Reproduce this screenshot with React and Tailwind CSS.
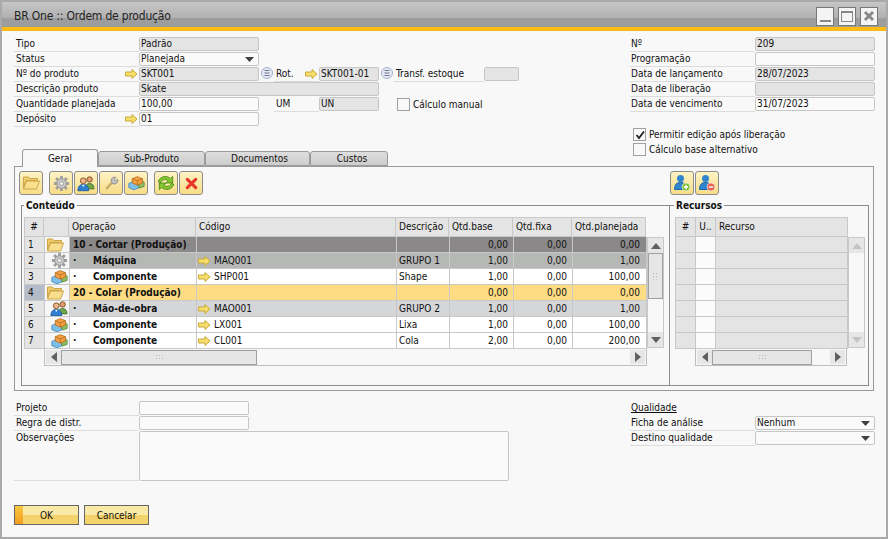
import React from 'react';

const FONT = { fontFamily: '"DejaVu Sans Condensed", "DejaVu Sans", sans-serif' };

const Arrow = () => (
  <svg width="13" height="10" viewBox="0 0 13 10" className="shrink-0">
    <path d="M0.500 3h6.500V0.500L12 5 7 9.500V7H0.500z" fill="#f6de6a" stroke="#c8a93a" strokeWidth="1" />
  </svg>
);

const ListIcon = () => (
  <svg width="12" height="12" viewBox="0 0 12 12" className="shrink-0">
    <circle cx="6" cy="6" r="5.500" fill="#e6eaf4" stroke="#a4aeca" />
    <path d="M3.500 3.500h5M3.500 6h5M3.500 8.500h5" stroke="#6b7690" strokeWidth="1" />
  </svg>
);

const Caret = () => (
  <svg width="9" height="5" viewBox="0 0 9 5" className="shrink-0">
    <path d="M0 0h9L4.500 5z" fill="#404040" />
  </svg>
);

const Folder = () => (
  <svg width="17" height="14" viewBox="0 0 17 14" className="shrink-0">
    <path d="M0.500 1h5l1.500 1.500h7.500v2H3L0.500 12z" fill="#f0cb6c" stroke="#cda548" />
    <path d="M3.500 5h13l-3 8H0.500z" fill="#f9df8e" stroke="#cda548" />
  </svg>
);

const Gear = () => (
  <svg width="17" height="17" viewBox="0 0 18 18" className="shrink-0">
    <path d="M9 1v3.500M9 13.500V17M1 9h3.500M13.500 9H17M3.300 3.300l2.500 2.500M12.200 12.200l2.500 2.500M14.700 3.300l-2.500 2.500M5.800 12.200l-2.500 2.500" stroke="#a0a0a0" strokeWidth="3" />
    <circle cx="9" cy="9" r="5" fill="#cccccc" stroke="#909090" />
    <circle cx="9" cy="9" r="2.200" fill="#f2f2f2" stroke="#989898" />
  </svg>
);

const Users = () => (
  <svg width="18" height="17" viewBox="0 0 20 18" className="shrink-0">
    <circle cx="14" cy="4.500" r="3" fill="#e0a070" stroke="#7a4a20" />
    <path d="M9 15c0-4 2-6 5-6s5 2 5 6z" fill="#6fa64a" stroke="#47752f" />
    <circle cx="7" cy="6" r="3.200" fill="#f0b888" stroke="#7a4a20" />
    <path d="M1 17c0-5 2.500-7 6-7s6 2 6 7z" fill="#2f7fd0" stroke="#1f5a9c" />
    <path d="M5.500 10.500 7 13l1.500-2.500z" fill="#fff" />
  </svg>
);

const Wrench = () => (
  <svg width="16" height="16" viewBox="0 0 16 16" className="shrink-0">
    <path d="M4 13 9 7.500" stroke="#c9aa68" strokeWidth="2.600" strokeLinecap="round" />
    <path d="M8 5.500a3.500 3.500 0 0 1 5-3l-2 2 1.500 1.500 2-2a3.500 3.500 0 0 1-5 4.500z" fill="#c4c4c4" stroke="#8e8e8e" />
  </svg>
);

const Cube = () => (
  <svg width="17" height="16" viewBox="0 0 20 18" className="shrink-0">
    <path d="M1 9.500 7 7l6 2.500v5L7 17l-6-2.500z" fill="#7cc0ea" stroke="#3f88c0" />
    <path d="M12 8l5-1.500L19 8v5l-6 2z" fill="#8cc063" stroke="#5a8a3c" />
    <path d="M5 4 11 1.500 17 4v5l-6 2.500L5 9z" fill="#f2a043" stroke="#b86e1c" />
    <path d="M5 4l6 2.500L17 4M11 6.500v5" fill="none" stroke="#b86e1c" />
  </svg>
);

const Refresh = () => (
  <svg width="20" height="20" viewBox="0 0 18 18" className="shrink-0">
    <path d="M2 8C3 3.500 9 1.500 13 5l2-2v6h-6l2-2C8.500 5 5 6 4.500 8.500z" fill="#84c832" stroke="#4d8a18" strokeWidth="0.800" />
    <path d="M16 10c-1 4.500-7 6.500-11 3l-2 2V9h6l-2 2c2.500 2 6 1 6.500-1.500z" fill="#84c832" stroke="#4d8a18" strokeWidth="0.800" />
  </svg>
);

const Cross = () => (
  <svg width="13" height="13" viewBox="0 0 14 14" className="shrink-0">
    <path d="M2.500 2.500l9 9M11.500 2.500l-9 9" stroke="#e8382c" strokeWidth="3.400" strokeLinecap="round" />
  </svg>
);

const Person = ({ sign }) => (
  <svg width="18" height="18" viewBox="0 0 18 18" className="shrink-0">
    <circle cx="7.500" cy="4.500" r="3.500" fill="#2f86cf" />
    <path d="M1.500 15.500c0-5 2-7 6-7s6 2 6 7z" fill="#2f86cf" stroke="#1f68a8" />
    <circle cx="13" cy="13" r="4" fill={sign === 'add' ? '#7ab82e' : '#e8604c'} stroke="#fff" strokeWidth="0.600" />
    {sign === 'add' ? (
      <path d="M13 10.800v4.400M10.800 13h4.400" stroke="#fff" strokeWidth="1.500" />
    ) : (
      <path d="M10.800 13h4.400" stroke="#fff" strokeWidth="1.500" />
    )}
  </svg>
);

const Label = ({ children, className = 'w-[125px] pl-[2px]', arrow }) => (
  <div className={`h-[15px] border-b border-[#dcdcdc] flex items-center justify-between shrink-0 text-[10px] leading-[14px] ${className}`}>
    <span className="whitespace-nowrap">{children}</span>
    {arrow && <span className="pr-px"><Arrow /></span>}
  </div>
);

const Field = ({ value, className = 'w-[120px]', disabled, caret }) => (
  <div
    className={`h-[14px] border border-[#c6c6c6] rounded-[2px] flex items-center justify-between pl-px pr-1 shrink-0 text-[10px] leading-[14px] overflow-hidden ${
      disabled ? 'bg-[#e4e4e4]' : 'bg-[#fafafa]'
    } ${className}`}
  >
    <span className="whitespace-nowrap">{value}</span>
    {caret && <Caret />}
  </div>
);

const CheckBox = ({ checked, label }) => (
  <div className="flex items-center h-[15px] gap-[3px]">
    <div className="w-[13px] h-[13px] border border-[#a0a0a0] bg-[#f8f8f8] flex items-center justify-center">
      {checked && (
        <svg width="10" height="10" viewBox="0 0 10 10">
          <path d="M1.500 5l2.500 3 5-6.500" fill="none" stroke="#202020" strokeWidth="1.800" />
        </svg>
      )}
    </div>
    <span className="text-[10px] leading-[14px] whitespace-nowrap">{label}</span>
  </div>
);

const ToolBtn = ({ children, className = '' }) => (
  <div className={`w-[24px] h-[24px] rounded-[3px] border border-[#8c8c8c] bg-gradient-to-b from-[#fdf3c4] to-[#f8dc86] flex items-center justify-center shrink-0 ${className}`}>
    {children}
  </div>
);

const Tab = ({ label, active, className }) => (
  <div
    className={`flex items-center justify-center rounded-t-[3px] border border-[#9a9a9a] text-[10px] ${
      active ? 'h-[18px] bg-[#f8f8f8] border-b-0 -mb-px z-10' : 'h-[15px] bg-gradient-to-b from-[#dedede] to-[#cdcdcd]'
    } ${className}`}
  >
    {label}
  </div>
);

const ScrollGrip = ({ vertical }) => (
  <svg width={vertical ? 5 : 7} height={vertical ? 7 : 5} viewBox={vertical ? '0 0 5 7' : '0 0 7 5'}>
    {vertical ? (
      <path d="M0 0h1v1H0zM3 0h1v1H3zM0 3h1v1H0zM3 3h1v1H3zM0 6h1v1H0zM3 6h1v1H3z" fill="#b8b8b8" />
    ) : (
      <path d="M0 0h1v1H0zM3 0h1v1H3zM6 0h1v1H6zM0 3h1v1H0zM3 3h1v1H3zM6 3h1v1H6z" fill="#b8b8b8" />
    )}
  </svg>
);

const ScrollBtn = ({ dir, faded }) => {
  const d = { up: 'M0 6L5 0l5 6z', down: 'M0 0h10L5 6z', left: 'M6 0v10L0 5z', right: 'M0 0v10l6-5z' }[dir];
  const horiz = dir === 'left' || dir === 'right';
  return (
    <div className={`bg-[#e6e6e6] flex items-center justify-center shrink-0 ${horiz ? 'w-[15px] h-[14px]' : 'w-[15px] h-[15px]'}`}>
      <svg width={horiz ? 6 : 10} height={horiz ? 10 : 6} viewBox={horiz ? '0 0 6 10' : '0 0 10 6'}>
        <path d={d} fill={faded ? '#c4c4c4' : '#606060'} />
      </svg>
    </div>
  );
};

const COLS = [
  { w: 'w-[20px]', align: 'pl-[3px]' },
  { w: 'w-[25px]', align: 'justify-center' },
  { w: 'w-[127px]', align: 'pl-[3px]' },
  { w: 'w-[200px]', align: 'pl-[1px]' },
  { w: 'w-[53px]', align: 'pl-[2px]' },
  { w: 'w-[64px]', align: 'justify-end pr-[5px]' },
  { w: 'w-[59px]', align: 'justify-end pr-[5px]' },
  { w: 'w-[74px]', align: 'justify-end pr-[6px]' },
];

const HEADERS = ['#', '', 'Operação', 'Código', 'Descrição', 'Qtd.base', 'Qtd.fixa', 'Qtd.planejada'];

const ROWS = [
  { n: 1, icon: <Folder />, type: 'head', op: '10 - Cortar (Produção)', qty: ['0,00', '0,00', '0,00'], bg: 'bg-[#8a8889]' },
  { n: 2, icon: <Gear />, op: 'Máquina', code: 'MAQ001', desc: 'GRUPO 1', qty: ['1,00', '0,00', '1,00'], bg: 'bg-[#b6b8b6]' },
  { n: 3, icon: <Cube />, op: 'Componente', code: 'SHP001', desc: 'Shape', qty: ['1,00', '0,00', '100,00'], bg: 'bg-white' },
  { n: 4, icon: <Folder />, type: 'head', op: '20 - Colar (Produção)', qty: ['0,00', '0,00', '0,00'], bg: 'bg-[#fddc84]', selected: true },
  { n: 5, icon: <Users />, op: 'Mão-de-obra', code: 'MAO001', desc: 'GRUPO 2', qty: ['1,00', '0,00', '1,00'], bg: 'bg-[#d4d6d8]' },
  { n: 6, icon: <Cube />, op: 'Componente', code: 'LX001', desc: 'Lixa', qty: ['1,00', '0,00', '100,00'], bg: 'bg-white' },
  { n: 7, icon: <Cube />, op: 'Componente', code: 'CL001', desc: 'Cola', qty: ['2,00', '0,00', '200,00'], bg: 'bg-white' },
];

const cell = 'h-[16px] border-r border-b border-[#c8c8c8] flex items-center shrink-0 overflow-hidden text-[10px] leading-[14px]';

const GridRow = ({ row }) => (
  <div className="flex">
    <div className={`${cell} ${COLS[0].w} ${COLS[0].align} ${row.selected ? 'bg-[#b3bcc8]' : 'bg-[#e4e4e4]'}`}>{row.n}</div>
    <div className={`${cell} ${COLS[1].w} bg-[#f6f6f6] ${row.type === 'head' ? 'justify-start pl-[2px]' : 'justify-end pr-px'}`}>
      {row.icon}
    </div>
    <div className={`${cell} ${COLS[2].w} ${row.bg} pl-[3px] font-bold whitespace-nowrap`}>
      {row.type === 'head' ? (
        row.op
      ) : (
        <>
          <span className="w-[20px] shrink-0">·</span>
          {row.op}
        </>
      )}
    </div>
    <div className={`${cell} ${COLS[3].w} ${row.bg} gap-[3px] pl-px`}>
      {row.code && <Arrow />}
      {row.code}
    </div>
    <div className={`${cell} ${COLS[4].w} ${row.bg} ${COLS[4].align}`}>{row.desc}</div>
    {row.qty.map((q, i) => (
      <div key={i} className={`${cell} ${COLS[5 + i].w} ${row.bg} ${COLS[5 + i].align}`}>{q}</div>
    ))}
  </div>
);

const Conteudo = () => (
  <div className="relative h-[181px] w-[648px] shrink-0 border-t border-l border-b border-[#8c8c8c] pl-[2px] pt-[11px]">
    <span className="absolute left-[2px] -top-[7px] bg-[#f8f8f8] px-[2px] font-bold text-[10px] leading-[14px]">Conteúdo</span>
    <div className="flex">
      <div className="w-[622px]">
        <div className="flex h-[20px]">
          {HEADERS.map((h, i) => (
            <div key={i} className={`border-r border-b border-t border-[#c8c8c8] bg-[#e4e4e4] flex items-center pb-px shrink-0 text-[10px] ${COLS[i].w} ${i === 0 ? 'border-l justify-center' : 'pl-[3px]'}`}>{h}</div>
          ))}
        </div>
        <div className="border-l border-[#c8c8c8]">
          {ROWS.map((r) => <GridRow key={r.n} row={r} />)}
        </div>
      </div>
      <div className="mt-[20px] w-[17px] h-[111px] ml-px border border-[#c8c8c8] bg-[#f8f8f8] flex flex-col items-center">
        <ScrollBtn dir="up" />
        <div className="w-[15px] h-[46px] border border-[#a0a0a0] bg-[#e6e6e6] flex items-center justify-center shrink-0">
          <ScrollGrip vertical />
        </div>
        <div className="flex-1" />
        <ScrollBtn dir="down" />
      </div>
    </div>
    <div className="ml-[20px] w-[603px] h-[17px] border-r border-b border-l border-[#bdbdbd] flex items-center justify-between px-px">
      <ScrollBtn dir="left" />
      <div className="w-[196px] mr-auto h-[15px] border border-[#a0a0a0] bg-[#e6e6e6] flex items-center justify-center">
        <ScrollGrip />
      </div>
      <ScrollBtn dir="right" />
    </div>
  </div>
);

const Recursos = () => (
  <div className="relative h-[181px] w-[200px] shrink-0 border border-[#8c8c8c] pl-[5px] pt-[11px]">
    <span className="absolute left-[4px] -top-[7px] bg-[#f8f8f8] px-[2px] font-bold text-[10px] leading-[14px]">Recursos</span>
    <div className="flex">
      <div className="w-[173px]">
        <div className="flex h-[20px]">
          {['#', 'U..', 'Recurso'].map((h, i) => (
            <div key={h} className={`border-r border-b border-t border-[#c8c8c8] bg-[#e4e4e4] flex items-center pb-px text-[10px] ${['w-[21px] border-l justify-center', 'w-[20px] justify-center', 'w-[132px] pl-[3px]'][i]}`}>{h}</div>
          ))}
        </div>
        <div className="border-l border-[#c8c8c8]">
          {[1, 2, 3, 4, 5, 6, 7].map((n) => (
            <div key={n} className="flex">
              <div className={`${cell} w-[20px] bg-[#e4e4e4]`} />
              <div className={`${cell} w-[20px] bg-[#fbfbfb]`} />
              <div className={`${cell} w-[132px] bg-[#e4e4e4]`} />
            </div>
          ))}
        </div>
      </div>
      <div className="mt-[20px] w-[17px] h-[111px] border border-[#c8c8c8] bg-[#f8f8f8] flex flex-col items-center justify-between">
        <ScrollBtn dir="up" faded />
        <ScrollBtn dir="down" faded />
      </div>
    </div>
    <div className="ml-[20px] w-[152px] h-[17px] border-r border-b border-l border-[#bdbdbd] flex items-center justify-between px-px">
      <ScrollBtn dir="left" />
      <div className="w-[100px] mr-auto h-[15px] border border-[#a0a0a0] bg-[#e6e6e6] flex items-center justify-center">
        <ScrollGrip />
      </div>
      <ScrollBtn dir="right" />
    </div>
  </div>
);

const RIGHT_LABEL = 'w-[125px] pl-px';

export default function App() {
  return (
    <div style={FONT} className="w-[888px] h-[539px] flex flex-col border-2 border-[#a9a9a9] bg-[#f8f8f8] text-[#111] overflow-hidden">
      {/* title bar */}
      <div className="h-[25px] shrink-0 flex items-center justify-between pl-[12px] pr-[8px] bg-[linear-gradient(#c6c6c6_0,#b0b0b0_65%,#9d9d9d_65%,#9d9d9d_100%)]">
        <span className="text-[12px] text-[#222] tracking-[-0.2px] mt-[3px]">BR One :: Ordem de produção</span>
        <div className="flex gap-[4px] mt-[3px]">
          {['min', 'max', 'close'].map((b) => (
            <div key={b} className="w-[18px] h-[19px] bg-[#f4f4f4] border border-[#777] flex items-center justify-center">
              {b === 'min' && <div className="w-[11px] h-[2px] bg-[#888] mt-[9px]" />}
              {b === 'max' && <div className="w-[12px] h-[11px] border border-[#888] border-t-2" />}
              {b === 'close' && (
                <svg width="12" height="12" viewBox="0 0 12 12">
                  <path d="M2 2l8 8M10 2l-8 8" stroke="#888" strokeWidth="3" />
                </svg>
              )}
            </div>
          ))}
        </div>
      </div>
      <div className="h-[4px] shrink-0 bg-[#fdbb13]" />

      {/* header form */}
      <div className="flex justify-between pl-[12px] pr-[11px] pt-[6px] shrink-0">
        <div className="flex flex-col">
          <div className="flex"><Label>Tipo</Label><Field value="Padrão" disabled /></div>
          <div className="flex"><Label>Status</Label><Field value="Planejada" caret /></div>
          <div className="flex items-start">
            <Label arrow>Nº do produto</Label>
            <Field value="SKT001" disabled />
            <span className="ml-[2px] mr-px"><ListIcon /></span>
            <Label className="w-[45px] pl-[2px]" arrow>Rot.</Label>
            <Field value="SKT001-01" disabled className="w-[60px]" />
            <span className="ml-[2px] mr-px"><ListIcon /></span>
            <Label className="w-[90px] pl-[2px]">Transf. estoque</Label>
            <Field value="" disabled className="w-[35px]" />
          </div>
          <div className="flex"><Label>Descrição produto</Label><Field value="Skate" disabled className="w-[240px]" /></div>
          <div className="flex items-start">
            <Label>Quantidade planejada</Label>
            <Field value="100,00" />
            <span className="w-[15px]" />
            <Label className="w-[45px] pl-[2px]">UM</Label>
            <Field value="UN" disabled className="w-[60px]" />
            <span className="ml-[18px]"><CheckBox label="Cálculo manual" /></span>
          </div>
          <div className="flex"><Label arrow>Depósito</Label><Field value="01" /></div>
        </div>
        <div className="flex flex-col">
          <div className="flex"><Label className={RIGHT_LABEL}>Nº</Label><Field value="209" disabled /></div>
          <div className="flex"><Label className={RIGHT_LABEL}>Programação</Label><Field value="" /></div>
          <div className="flex"><Label className={RIGHT_LABEL}>Data de lançamento</Label><Field value="28/07/2023" disabled /></div>
          <div className="flex"><Label className={RIGHT_LABEL}>Data de liberação</Label><Field value="" disabled /></div>
          <div className="flex"><Label className={RIGHT_LABEL}>Data de vencimento</Label><Field value="31/07/2023" /></div>
          <div className="h-[15px]" />
          <div className="pl-[3px]"><CheckBox checked label="Permitir edição após liberação" /></div>
          <div className="pl-[3px]"><CheckBox label="Cálculo base alternativo" /></div>
        </div>
      </div>

      {/* tabs */}
      <div className="flex items-end pl-[20px] h-[17px] -mt-[8px] shrink-0">
        <Tab label="Geral" active className="w-[76px]" />
        <Tab label="Sub-Produto" className="w-[107px]" />
        <Tab label="Documentos" className="w-[105px] pl-[4px]" />
        <Tab label="Custos" className="w-[78px] pl-[6px]" />
      </div>

      {/* panel */}
      <div className="mx-[12px] w-[860px] h-[225px] shrink-0 border border-[#9a9a9a]">
        <div className="flex justify-between h-[38px] pl-[4px] pr-[154px] pt-[4px]">
          <div className="flex">
            <ToolBtn><Folder /></ToolBtn>
            <ToolBtn className="ml-[6px]"><Gear /></ToolBtn>
            <ToolBtn className="ml-px"><Users /></ToolBtn>
            <ToolBtn className="ml-px"><Wrench /></ToolBtn>
            <ToolBtn className="ml-px"><Cube /></ToolBtn>
            <ToolBtn className="ml-[6px]"><Refresh /></ToolBtn>
            <ToolBtn className="ml-px"><Cross /></ToolBtn>
          </div>
          <div className="flex gap-px">
            <ToolBtn><Person sign="add" /></ToolBtn>
            <ToolBtn><Person sign="remove" /></ToolBtn>
          </div>
        </div>
        <div className="flex pl-[6px]">
          <Conteudo />
          <Recursos />
        </div>
      </div>

      {/* footer form */}
      <div className="flex justify-between pl-[12px] pr-[11px] pt-[10px] shrink-0">
        <div className="flex flex-col">
          <div className="flex"><Label>Projeto</Label><Field value="" className="w-[110px]" /></div>
          <div className="flex"><Label>Regra de distr.</Label><Field value="" className="w-[110px]" /></div>
          <div className="flex">
            <Label className="w-[125px] pl-[2px] !h-[50px] !items-start">Observações</Label>
            <Field value="" className="w-[370px] !h-[50px]" />
          </div>
        </div>
        <div className="flex flex-col">
          <div className="h-[15px] pl-px text-[10px] leading-[14px] underline">Qualidade</div>
          <div className="flex"><Label className={RIGHT_LABEL}>Ficha de análise</Label><Field value="Nenhum" caret /></div>
          <div className="flex"><Label className={RIGHT_LABEL}>Destino qualidade</Label><Field value="" caret /></div>
        </div>
      </div>

      {/* action buttons */}
      <div className="flex gap-[5px] pl-[12px] mt-[24px]">
        <div className="relative w-[65px] h-[20px] border border-[#666] bg-gradient-to-b from-[#faeaa8] from-50% to-[#f4d26c] to-50% flex items-center justify-center text-[10px] overflow-hidden">
          <div className="absolute left-0 top-0 bottom-0 w-[8px] bg-gradient-to-b from-[#fac840] to-[#f09c20]" />
          OK
        </div>
        <div className="w-[65px] h-[20px] border border-[#666] bg-gradient-to-b from-[#faeaa8] from-50% to-[#f4d26c] to-50% flex items-center justify-center text-[10px]">
          Cancelar
        </div>
      </div>
    </div>
  );
}
